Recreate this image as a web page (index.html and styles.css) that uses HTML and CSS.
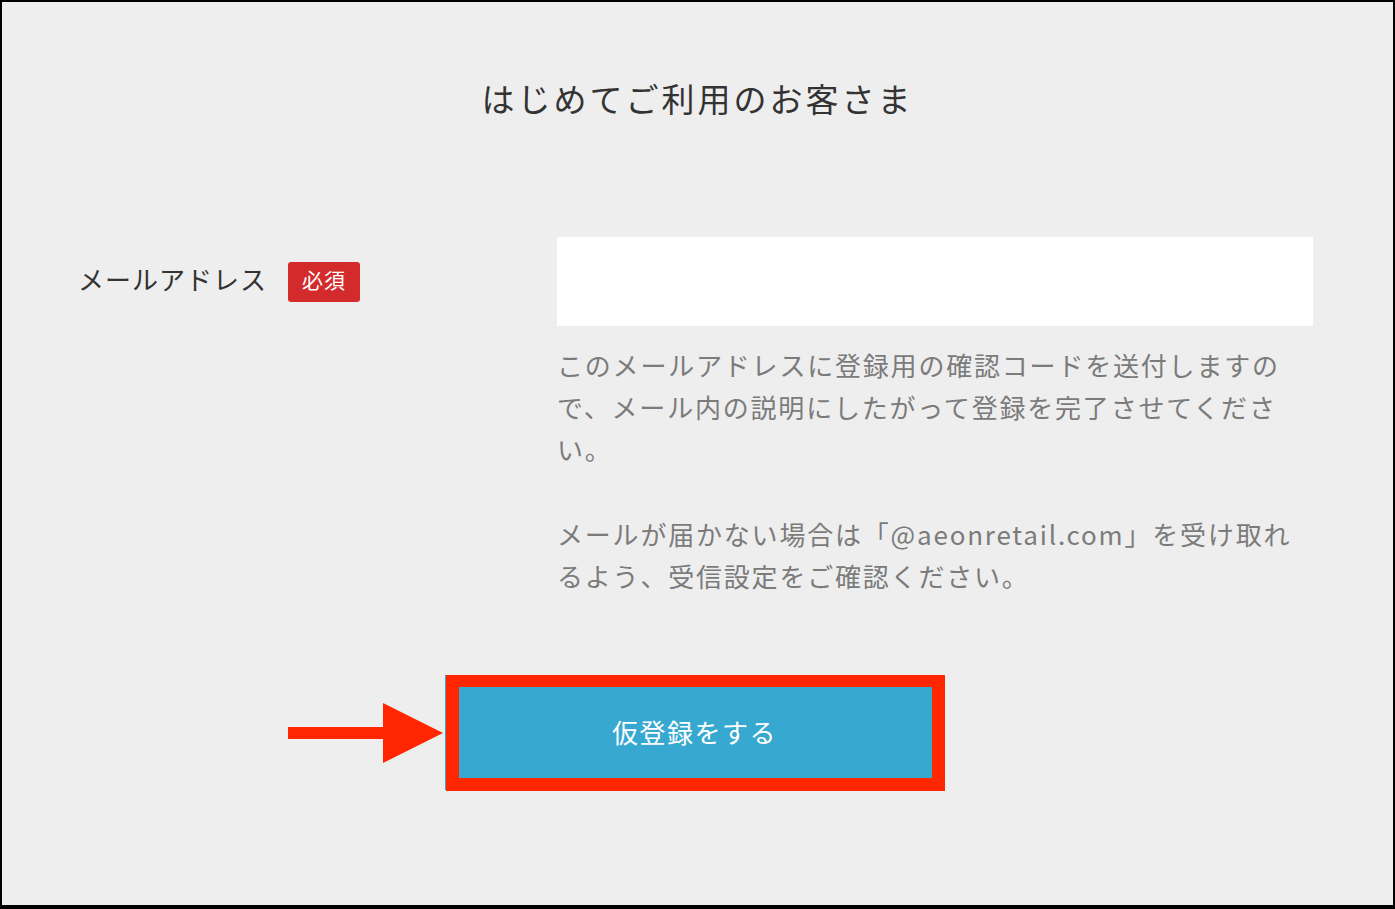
FILE: index.html
```html
<!DOCTYPE html>
<html lang="ja">
<head>
<meta charset="utf-8">
<title>はじめてご利用のお客さま</title>
<link rel="stylesheet" href="styles.css">
</head>
<body>
<div class="frame">
  <h1 class="title">はじめてご利用のお客さま</h1>
  <div class="form-row">
    <div class="label-col">
      <span class="label">メールアドレス</span>
      <span class="badge">必須</span>
    </div>
    <div class="field-col">
      <div class="input"></div>
      <p class="help">このメールアドレスに登録用の確認コードを送付しますので、メール内の説明にしたがって登録を完了させてください。</p>
      <p class="help help-second">メールが届かない場合は「@aeonretail.com」を受け取れるよう、受信設定をご確認ください。</p>
    </div>
  </div>
  <div class="button-row">
    <div class="button-wrap">
      <button class="submit" type="button">仮登録をする</button>
      <div class="highlight"></div>
      <svg class="arrow" width="156" height="60" viewBox="0 0 156 60">
        <rect x="0" y="24" width="96" height="12" fill="#ff2600"/>
        <polygon points="95,0 155,30 95,60" fill="#ff2600"/>
      </svg>
    </div>
  </div>
</div>
</body>
</html>
```
FILE: styles.css
```css
* { box-sizing: border-box; }
html, body { margin: 0; padding: 0; }
body {
  font-family: "Noto Sans CJK JP", "Noto Sans", sans-serif;
  background: #eeeeee;
}
.frame {
  width: 1395px;
  height: 909px;
  border: 2px solid #000;
  border-bottom-width: 4px;
  background: #eeeeee;
  overflow: hidden;
}
.title {
  margin: 71px 0 0;
  text-align: center;
  font-size: 33px;
  line-height: 50px;
  font-weight: 400;
  letter-spacing: 3px;
  color: #333;
  padding-left: 0;
}
.form-row {
  display: flex;
  margin-top: 114px;
  padding-left: 76px;
}
.label-col {
  width: 479px;
  height: 89px;
  display: flex;
  align-items: center;
  gap: 21px;
}
.label {
  font-size: 26px;
  letter-spacing: 1px;
  color: #333;
  line-height: 1;
  padding-bottom: 5px;
}
.badge {
  display: inline-flex;
  align-items: center;
  justify-content: center;
  width: 72px;
  height: 40px;
  border-radius: 3px;
  background: #d32b2b;
  color: #fff;
  font-size: 21px;
  line-height: 1;
  letter-spacing: 1px;
  padding-bottom: 4px;
}
.field-col {
  width: 756px;
}
.input {
  height: 89px;
  background: #fff;
}
.help {
  margin: 18px 0 0;
  font-size: 26px;
  letter-spacing: 1.8px;
  line-height: 42px;
  color: #7b7b7b;
}
.help-second {
  margin-top: 43px;
}
.button-row {
  display: flex;
  justify-content: center;
  padding-right: 6px;
  margin-top: 78px;
}
.button-wrap {
  position: relative;
}
.submit {
  display: block;
  width: 499px;
  height: 115px;
  border: 0;
  background: #37a8d0;
  color: #fff;
  font-family: inherit;
  font-size: 26px;
  letter-spacing: 1.5px;
  padding-bottom: 3px;
  cursor: pointer;
}
.highlight {
  position: absolute;
  left: 1px;
  top: 0;
  width: 499px;
  height: 116px;
  border: 13px solid #ff2600;
  border-top-width: 12px;
  pointer-events: none;
}
.arrow {
  position: absolute;
  left: -157px;
  top: 28px;
}
```
